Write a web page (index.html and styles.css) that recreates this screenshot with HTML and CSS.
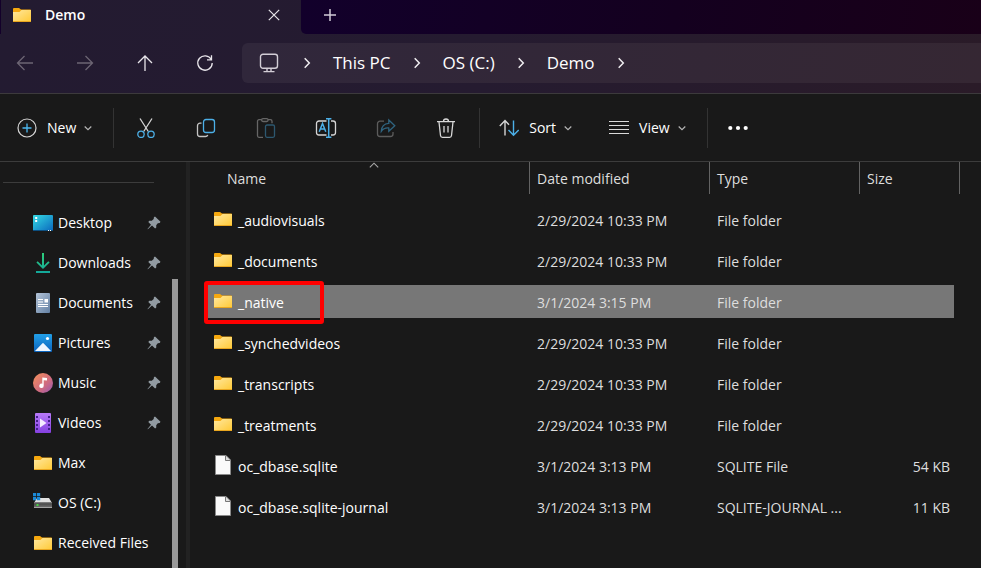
FILE: index.html
```html
<!DOCTYPE html>
<html lang="en">
<head>
<meta charset="utf-8">
<title>Demo</title>
<link rel="stylesheet" href="styles.css">
</head>
<body>
<svg class="defs" aria-hidden="true">
  <defs>
    <linearGradient id="g-folder" x1="0" y1="0" x2="1" y2="1"><stop offset="0" stop-color="#ffe8a0"/><stop offset="1" stop-color="#ffc935"/></linearGradient>
    <linearGradient id="g-desk" x1="0" y1="0" x2="1" y2="1"><stop offset="0" stop-color="#35dbe4"/><stop offset="1" stop-color="#0a67bd"/></linearGradient>
    <linearGradient id="g-down" x1="0" y1="0" x2="0" y2="1"><stop offset="0" stop-color="#2fd07c"/><stop offset="1" stop-color="#13a79b"/></linearGradient>
    <linearGradient id="g-doc" x1="0" y1="0" x2="1" y2="1"><stop offset="0" stop-color="#b4c4d8"/><stop offset="1" stop-color="#6380a3"/></linearGradient>
    <linearGradient id="g-pic" x1="0" y1="0" x2="0" y2="1"><stop offset="0" stop-color="#22a0e8"/><stop offset="1" stop-color="#0b63bd"/></linearGradient>
    <linearGradient id="g-music" x1="0" y1="0" x2="1" y2="1"><stop offset="0" stop-color="#f4915a"/><stop offset=".6" stop-color="#cf6b80"/><stop offset="1" stop-color="#9557b5"/></linearGradient>
    <linearGradient id="g-video" x1="0" y1="0" x2="0" y2="1"><stop offset="0" stop-color="#b87af8"/><stop offset="1" stop-color="#8440e0"/></linearGradient>
    <linearGradient id="g-drive" x1="0" y1="0" x2="0" y2="1"><stop offset="0" stop-color="#8d8d8d"/><stop offset=".3" stop-color="#4a4a4a"/><stop offset="1" stop-color="#777"/></linearGradient>
  </defs>
  <symbol id="folder" viewBox="0 0 20 20">
    <path d="M1 4a1 1 0 0 1 1-1h5l2 1.500h9.200a.8.8 0 0 1 .8.800V10H1z" fill="#f5a80f"/>
    <path d="M1 7h6.500l2-2H19v12H1z" fill="url(#g-folder)"/>
    <path d="M1 16h18v.400a.6.6 0 0 1-.6.600H1.600a.6.6 0 0 1-.6-.600z" fill="#e9a61f"/>
  </symbol>
  <symbol id="file" viewBox="0 0 20 20">
    <path d="M2.500.5h10.500l4.500 4.500v14.500h-15z" fill="#fafafa" stroke="#8a8a8a"/>
    <path d="M12.500 1v4.500H17" fill="#ddd" stroke="#777"/>
  </symbol>
  <symbol id="pin" viewBox="0 0 14 14">
    <path d="M8 .5l5.500 5.200-.8 1.200-1.900.3-1.600 2 .1 2.300-1.200 1L5 9.600.9 13.300.5 12.900 4 8.700 1.300 5.900l1-1.200 2.500 0 1.900-1.600.2-1.900z" fill="#929ba2"/>
  </symbol>
  <symbol id="down" viewBox="0 0 8 8"><path d="M.7 2.500L4 5.600l3.300-3.100" fill="none" stroke="#b5b5b5" stroke-width="1.200"/></symbol>
  <symbol id="right" viewBox="0 0 8 12"><path d="M1.700 1.200L6.300 6l-4.600 4.800" fill="none" stroke="#f0eef1" stroke-width="1.500"/></symbol>
</svg>

<header class="chrome">
  <div class="tabs">
    <div class="tab">
      <svg class="icon"><use href="#folder"/></svg>
      <span class="tab-title">Demo</span>
      <button class="plain close" aria-label="Close tab"><svg width="12" height="12" viewBox="0 0 12 12"><path d="M.8.8l10.400 10.400M11.200.8L.8 11.200" stroke="#e8e6ea" stroke-width="1.200"/></svg></button>
    </div>
    <div class="tab-rest">
      <button class="plain" aria-label="New tab"><svg width="14" height="14" viewBox="0 0 14 14"><path d="M7 1v12M1 7h12" stroke="#d2ccd8" stroke-width="1.500"/></svg></button>
    </div>
  </div>
  <div class="navbar">
    <div class="nav-buttons">
      <button class="plain off" aria-label="Back"><svg width="18" height="18" viewBox="0 0 18 18"><path d="M17 9H2M8.500 2L1.500 9l7 7"/></svg></button>
      <button class="plain off" aria-label="Forward"><svg width="18" height="18" viewBox="0 0 18 18"><path d="M1 9h15M9.500 2l7 7-7 7"/></svg></button>
      <button class="plain" aria-label="Up"><svg width="18" height="18" viewBox="0 0 18 18"><path d="M9 17V2M2 9l7-7 7 7"/></svg></button>
      <button class="plain" aria-label="Refresh"><svg width="18" height="18" viewBox="0 0 18 18"><path d="M15.300 5.500A7.200 7.200 0 1 0 16.200 9M15.500 1.300v4.500h-4.500"/></svg></button>
    </div>
    <nav class="address" aria-label="Address">
      <svg class="monitor" viewBox="0 0 20 20" fill="none" stroke="#d3ced6" stroke-width="1.400"><rect x="1.500" y="1.300" width="17" height="14" rx="2.500"/><path d="M8 15.500v3M12 15.500v3M4.500 18.600h11"/></svg>
      <svg class="crumb"><use href="#right"/></svg>
      <a href="#">This PC</a>
      <svg class="crumb"><use href="#right"/></svg>
      <a href="#">OS (C:)</a>
      <svg class="crumb"><use href="#right"/></svg>
      <a href="#">Demo</a>
      <svg class="crumb"><use href="#right"/></svg>
    </nav>
  </div>
</header>

<div class="toolbar" role="toolbar">
  <button class="plain labelled new"><svg class="icon" viewBox="0 0 20 20" fill="none"><circle cx="10" cy="10" r="9" stroke="#d5d5d5" stroke-width="1.200"/><path d="M10 5.500v9M5.500 10h9" stroke="#4cb8f0" stroke-width="1.300"/></svg><span>New</span><svg class="down"><use href="#down"/></svg></button>
  <span class="divider"></span>
  <div class="tools">
    <button class="plain" aria-label="Cut"><svg class="icon" viewBox="0 0 20 20" fill="none" stroke-width="1.300"><path d="M4 .5l8.300 13M16 .5L7.700 13.500" stroke="#d5d5d5"/><circle cx="5" cy="16.300" r="3.200" stroke="#4cb0e8"/><circle cx="15" cy="16.300" r="3.200" stroke="#4cb0e8"/></svg></button>
    <button class="plain" aria-label="Copy"><svg class="icon" viewBox="0 0 20 20" fill="none" stroke-width="1.300"><path d="M5.500 5.200H4A2.500 2.500 0 0 0 1.500 7.700V16A2.500 2.500 0 0 0 4 18.500h5.500A2.500 2.500 0 0 0 11.800 17" stroke="#c4c4c4"/><rect x="7.500" y="1.500" width="11" height="13" rx="2.500" stroke="#4cb0e8"/></svg></button>
    <button class="plain" aria-label="Paste"><svg class="icon" viewBox="0 0 20 20" fill="none" stroke-width="1.300"><path d="M5.500 1.700H3A1.500 1.500 0 0 0 1.500 3.200v14.600A1.500 1.500 0 0 0 3 19.300h4M12 1.700h2.500A1.500 1.500 0 0 1 16 3.200v2" stroke="#666"/><rect x="5.600" y=".7" width="6.500" height="2.800" rx="1.400" stroke="#666"/><rect x="9.500" y="7" width="9" height="12.300" rx="1.500" stroke="#2d5870"/></svg></button>
    <button class="plain" aria-label="Rename"><svg class="rename" viewBox="0 0 22 20" fill="none" stroke-width="1.300"><path d="M11.500 3H4A2.500 2.500 0 0 0 1.500 5.500v9A2.500 2.500 0 0 0 4 17h7.500M16 3h2a2.500 2.500 0 0 1 2.500 2.500v9A2.500 2.500 0 0 1 18 17h-2" stroke="#d5d5d5"/><path d="M13.700.8v18.400M11 .7h5.400M11 19.300h5.400M4.200 13.800L7.500 5.500l3.300 8.300M5.400 11h4.200" stroke="#4cb0e8" stroke-width="1.500"/></svg></button>
    <button class="plain" aria-label="Share"><svg class="icon" viewBox="0 0 20 20" fill="none" stroke-width="1.300"><path d="M8 3.200H4A2.500 2.500 0 0 0 1.500 5.700V16A2.500 2.500 0 0 0 4 18.500h10.500A2.500 2.500 0 0 0 17 16v-2" stroke="#5c5c5c"/><path d="M12.800 2l6 5.700-6 5.500v-3.200c-3.500-.3-5.800.8-7.500 3.300.2-4.500 2.800-7.700 7.500-8z" stroke="#2f6480"/></svg></button>
    <button class="plain" aria-label="Delete"><svg class="icon" viewBox="0 0 20 20" fill="none" stroke="#d8d8d8" stroke-width="1.300"><path d="M1 3.700h18M7.500 3.500a2.500 2.500 0 0 1 5 0M3 4l1.500 13.500a2 2 0 0 0 2 1.800h7a2 2 0 0 0 2-1.800L17 4M8 8v6.500M12 8v6.500"/></svg></button>
  </div>
  <span class="divider"></span>
  <button class="plain labelled sort"><svg class="icon" viewBox="0 0 20 20" fill="none" stroke-width="1.400"><path d="M6 17.500V3M.8 8L6 2.500 10 6.800" stroke="#d5d5d5"/><path d="M14.500 2.500V17M9.500 12l5 5.300L19.700 12" stroke="#4cb0e8"/></svg><span>Sort</span><svg class="down"><use href="#down"/></svg></button>
  <button class="plain labelled view"><svg class="icon" viewBox="0 0 20 20" stroke="#dadada" stroke-width="1.200"><path d="M0 3.500h20M0 7.500h20M0 11.500h20M0 15.500h20"/></svg><span>View</span><svg class="down"><use href="#down"/></svg></button>
  <span class="divider"></span>
  <button class="plain more" aria-label="See more"><svg class="icon" viewBox="0 0 20 20" fill="#fff"><circle cx="2.300" cy="10" r="2.100"/><circle cx="10" cy="10" r="2.100"/><circle cx="17.700" cy="10" r="2.100"/></svg></button>
</div>

<div class="body">
  <aside class="side">
    <nav class="places" aria-label="Quick access">
      <hr>
      <a href="#"><svg class="icon" viewBox="0 0 20 20"><rect y="2" width="20" height="16" rx="1" fill="url(#g-desk)"/><path d="M0 17h20v.500a.5.5 0 0 1-.5.500H.500a.5.500 0 0 1-.5-.500z" fill="#0c4f80"/><path d="M2.200 4h2v2h-2zM2.200 7h2v2h-2zM15 17h1v1h-1zM17 17h1v1h-1z" fill="#fff"/></svg><span>Desktop</span><svg class="pin"><use href="#pin"/></svg></a>
      <a href="#"><svg class="icon" viewBox="0 0 20 20"><path d="M9 0h2v12.500l4.300-4.200 1.300 1.300L10 16 3.400 9.600l1.300-1.300L9 12.500zM3 18h14v2H3z" fill="url(#g-down)"/></svg><span>Downloads</span><svg class="pin"><use href="#pin"/></svg></a>
      <a href="#"><svg class="icon" viewBox="0 0 20 20"><rect x="3" width="14" height="20" rx="1" fill="url(#g-doc)"/><path d="M5 6h5v1H5zM5 8.500h5v1H5zM5 11h10v1H5zM5 13h10v1H5zM11.500 6H15v3.500h-3.500z" fill="#fff"/></svg><span>Documents</span><svg class="pin"><use href="#pin"/></svg></a>
      <a href="#"><svg class="icon" viewBox="0 0 20 20"><rect x="1" y="1" width="18" height="18" rx="1" fill="url(#g-pic)"/><path d="M2 18l7-7.300a1.300 1.300 0 0 1 2 0l7 7.300z" fill="#eef7ff"/><circle cx="14.500" cy="5.500" r="1.600" fill="#fff"/></svg><span>Pictures</span><svg class="pin"><use href="#pin"/></svg></a>
      <a href="#"><svg class="icon" viewBox="0 0 20 20"><circle cx="10" cy="10" r="10" fill="url(#g-music)"/><path d="M9.300 4.500L14 5v2.500l-3.300-.3v5.600a2.200 2.200 0 1 1-1.400-2z" fill="#fff"/></svg><span>Music</span><svg class="pin"><use href="#pin"/></svg></a>
      <a href="#"><svg class="icon" viewBox="0 0 20 20"><rect x="2" width="16" height="20" rx="1" fill="url(#g-video)"/><path d="M3 3h2v2H3zM3 7h2v2H3zM3 11h2v2H3zM3 15h2v2H3zM15 3h2v2h-2zM15 7h2v2h-2zM15 11h2v2h-2zM15 15h2v2h-2z" fill="#42208a"/><path d="M7 5.500l6.500 4.500L7 14.500z" fill="#f4ecff"/></svg><span>Videos</span><svg class="pin"><use href="#pin"/></svg></a>
      <a href="#"><svg class="icon"><use href="#folder"/></svg><span>Max</span></a>
      <a href="#"><svg class="icon" viewBox="0 0 20 20"><path d="M4 5h12l3 5H1z" fill="#e2e2e2"/><rect x="1" y="9" width="18" height="6" rx=".5" fill="url(#g-drive)"/><path d="M1 14h18v1H1z" fill="#a4a4a4"/><rect x="3.500" y="11" width="2" height="2" fill="#45d645"/><path d="M0 0h3.200v3.200H0zM4 0h3.200v3.200H4zM0 4h3.200v3.200H0zM4 4h3.200v3.200H4z" fill="#1b8ad8"/></svg><span>OS (C:)</span></a>
      <a href="#"><svg class="icon"><use href="#folder"/></svg><span>Received Files</span></a>
    </nav>
    <div class="scroll"></div>
  </aside>

  <main class="files">
    <table>
      <colgroup><col><col class="c-date"><col class="c-type"><col class="c-size"></colgroup>
      <thead>
        <tr>
          <th class="first"><button class="plain head">Name</button><svg class="caret" width="10" height="6" viewBox="0 0 10 6"><path d="M.8 5.300L5 1.200l4.200 4.100" fill="none" stroke="#aaa" stroke-width="1.100"/></svg></th>
          <th><button class="plain head">Date modified</button></th>
          <th><button class="plain head">Type</button></th>
          <th><button class="plain head">Size</button></th>
        </tr>
      </thead>
      <tbody>
        <tr><td><div class="name"><svg class="icon"><use href="#folder"/></svg><span>_audiovisuals</span></div></td><td>2/29/2024 10:33 PM</td><td>File folder</td><td></td></tr>
        <tr><td><div class="name"><svg class="icon"><use href="#folder"/></svg><span>_documents</span></div></td><td>2/29/2024 10:33 PM</td><td>File folder</td><td></td></tr>
        <tr class="selected"><td><div class="name"><svg class="icon"><use href="#folder"/></svg><span>_native</span><i class="mark"></i></div></td><td>3/1/2024 3:15 PM</td><td>File folder</td><td></td></tr>
        <tr><td><div class="name"><svg class="icon"><use href="#folder"/></svg><span>_synchedvideos</span></div></td><td>2/29/2024 10:33 PM</td><td>File folder</td><td></td></tr>
        <tr><td><div class="name"><svg class="icon"><use href="#folder"/></svg><span>_transcripts</span></div></td><td>2/29/2024 10:33 PM</td><td>File folder</td><td></td></tr>
        <tr><td><div class="name"><svg class="icon"><use href="#folder"/></svg><span>_treatments</span></div></td><td>2/29/2024 10:33 PM</td><td>File folder</td><td></td></tr>
        <tr><td><div class="name"><svg class="icon"><use href="#file"/></svg><span>oc_dbase.sqlite</span></div></td><td>3/1/2024 3:13 PM</td><td>SQLITE File</td><td>54 KB</td></tr>
        <tr><td><div class="name"><svg class="icon"><use href="#file"/></svg><span>oc_dbase.sqlite-journal</span></div></td><td>3/1/2024 3:13 PM</td><td>SQLITE-JOURNAL ...</td><td>11 KB</td></tr>
      </tbody>
    </table>
  </main>
</div>
</body>
</html>
```
FILE: styles.css
```css
* { box-sizing: border-box; }

body {
  margin: 0;
  height: 100vh;
  overflow: hidden;
  display: flex;
  flex-direction: column;
  background: #191919;
  color: #fff;
  font: 14px/20px "Open Sans", "Noto Sans", sans-serif;
}

svg { display: block; flex: none; }
.defs { position: absolute; width: 0; height: 0; }
.icon { width: 20px; height: 20px; }
a { color: inherit; text-decoration: none; }

.plain {
  display: flex;
  align-items: center;
  justify-content: center;
  padding: 0;
  border: 0;
  background: none;
  color: inherit;
  font: inherit;
}

/* Window chrome */
.chrome {
  flex: none;
  background: linear-gradient(100deg, #231b31 0%, #251b30 50%, #2a1b28 100%);
  border-bottom: 1px solid #3c3a3c;
}
.tabs { display: flex; height: 34px; }
.tab {
  display: flex;
  align-items: center;
  width: 301px;
  padding: 0 21px 5px 11px;
  border-left: 1px solid #13002a;
}
.tab-title { margin-left: 13px; font-weight: 600; }
.close { margin-left: auto; }
.tab-rest {
  flex: 1;
  display: flex;
  padding: 0 0 4px 22px;
  border-bottom-left-radius: 5px;
  background: linear-gradient(100deg, #12002b 0%, #14001f 55%, #190018 100%);
}
.navbar {
  display: flex;
  align-items: center;
  height: 59px;
  padding-bottom: 2px;
}
.nav-buttons { display: flex; gap: 10px; margin-right: 12px; }
.nav-buttons button { width: 50px; height: 40px; }
.nav-buttons svg { fill: none; stroke: #e8e5ea; stroke-width: 1.3; }
.nav-buttons .off svg { stroke: #6c6573; }
.address {
  flex: 1;
  display: flex;
  align-items: center;
  gap: 22px;
  height: 40px;
  padding-left: 17px;
  border-radius: 6px 0 0 6px;
  background: linear-gradient(100deg, #30273b, #352733);
  font-size: 17px;
}
.monitor { width: 20px; height: 20px; margin-right: 2px; }
.crumb { width: 8px; height: 12px; }

/* Command bar */
.toolbar {
  flex: none;
  display: flex;
  align-items: center;
  height: 68px;
  border-bottom: 1px solid #3c3c3c;
}
.toolbar button { height: 40px; }
.tools { display: flex; margin: 0 3px 0 2px; }
.tools button { width: 60px; }
.rename { width: 22px; height: 20px; }
.divider { width: 1px; height: 40px; background: #333; }
.labelled span { margin: 0 8px 0 10px; }
.down { width: 8px; height: 8px; }
.new { padding: 0 21px 0 17px; }
.sort { padding: 0 18px 0 19px; }
.view { padding: 0 21px 0 19px; }
.more { margin-left: 20px; }

/* Sidebar */
.body { flex: 1; display: flex; min-height: 0; }
.side {
  flex: none;
  display: flex;
  width: 190px;
  overflow: hidden;
  border-right: 4px solid #222;
}
.places { width: 172px; }
.places hr {
  margin: 20px 18px 20px 3px;
  border: 0;
  border-top: 1px solid #3c3c3c;
}
.places a {
  display: flex;
  align-items: center;
  height: 40px;
  padding: 0 11px 0 33px;
}
.places span { margin-left: 5px; }
.pin { width: 14px; height: 14px; margin-left: auto; }
.scroll { width: 6px; margin-top: 117px; background: #999; }

/* File list */
.files { flex: 1; padding: 0 21px 0 18px; }
table { width: 100%; table-layout: fixed; border-collapse: collapse; }
.c-date { width: 180px; }
.c-type { width: 150px; }
.c-size { width: 100px; }
th {
  position: relative;
  padding: 0 0 6px;
  font-weight: 400;
  color: #dedede;
}
.head {
  justify-content: flex-start;
  width: 100%;
  height: 32px;
  padding: 2px 0 0 7px;
  border-right: 1px solid #636363;
}
.first .head { padding-left: 19px; }
.caret { position: absolute; top: 0; left: 50%; }
td {
  height: 41px;
  padding: 0 0 0 7px;
  color: #dedede;
  white-space: nowrap;
}
td:last-child { padding-right: 10px; text-align: right; }
.name {
  position: relative;
  display: flex;
  align-items: center;
  margin-left: -2px;
  color: #fff;
}
.name .icon { margin-bottom: 4px; }
.name span { margin-left: 5px; }
.selected {
  background: linear-gradient(#777, #777) 0 3px / calc(100% - 6px) 33px no-repeat;
}
.mark {
  position: absolute;
  top: -10px;
  left: -9px;
  width: 120px;
  height: 43px;
  border: 4px solid #f00;
  border-radius: 3px;
}
```
